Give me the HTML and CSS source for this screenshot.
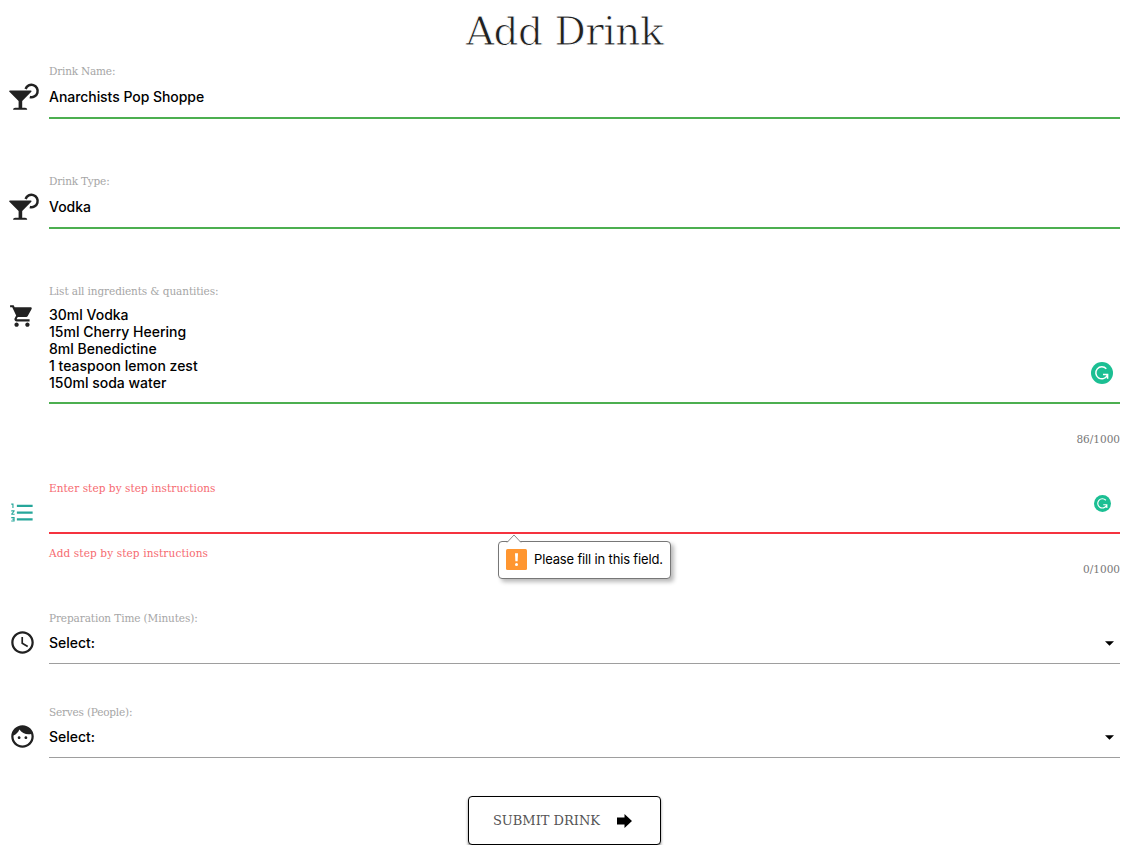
FILE: index.html
```html
<!DOCTYPE html>
<html lang="en">
<head>
<meta charset="utf-8">
<title>Add Drink</title>
<link rel="stylesheet" href="styles.css">
</head>
<body>
<svg class="defs" aria-hidden="true">
  <symbol id="cocktail" viewBox="0 0 31 28">
    <path d="M16.600 6A6.200 6.200 0 1 1 20.800 14" fill="none" stroke="#212121" stroke-width="2.500"/>
    <path d="M1 7.400h20.800c.8 0 1 .8.5 1.300L13.200 18v6.800h2.900c1.200 0 2.100.8 2.100 2H4.100c0-1.200.9-2 2.100-2h3.400V18L.4 8.700C-.1 8.200.2 7.400 1 7.400z" fill="#212121"/>
  </symbol>
  <symbol id="grammar" viewBox="0 0 22 22">
    <circle cx="11" cy="11" r="11" fill="#1bbf93"/>
    <path d="M15.300 6.800A6 6 0 1 0 16.200 13.500M12 12.600h4.600v4.200" fill="none" stroke="#fff" stroke-width="1.500"/>
  </symbol>
</svg>
<main class="page">
  <h1 class="title"><span>Add Drink</span></h1>
  <form class="form">
    <section class="row row-input">
      <svg class="icon icon-cocktail"><use href="#cocktail"/></svg>
      <div class="field">
        <label class="label l-name">Drink Name:</label>
        <div class="control valid"><span class="v-name">Anarchists Pop Shoppe</span></div>
      </div>
    </section>
    <section class="row row-input">
      <svg class="icon icon-cocktail"><use href="#cocktail"/></svg>
      <div class="field">
        <label class="label l-type">Drink Type:</label>
        <div class="control valid"><span>Vodka</span></div>
      </div>
    </section>
    <section class="row row-ingredients">
      <svg class="icon icon-cart" viewBox="0 0 24 24"><path fill="#212121" d="M7 18c-1.100 0-1.990.9-1.990 2S5.900 22 7 22s2-.9 2-2-.9-2-2-2zM1 2v2h2l3.600 7.590-1.350 2.450c-.16.28-.25.61-.25.96 0 1.100.9 2 2 2h12v-2H7.420c-.14 0-.25-.11-.25-.25l.03-.12.9-1.630h7.450c.75 0 1.410-.41 1.750-1.030l3.580-6.490c.08-.14.12-.31.12-.48 0-.55-.45-1-1-1H5.210l-.94-2H1zm16 16c-1.100 0-1.990.9-1.990 2s.89 2 1.990 2 2-.9 2-2-.9-2-2-2z"/></svg>
      <div class="field">
        <label class="label l-ing">List all ingredients &amp; quantities:</label>
        <div class="control textarea valid">
          <div class="lines"><span>30ml Vodka</span><br><span>15ml Cherry Heering</span><br><span>8ml Benedictine</span><br><span>1 teaspoon lemon zest</span><br><span>150ml soda water</span></div>
          <svg class="grammar"><use href="#grammar"/></svg>
        </div>
        <div class="foot"><span></span><span class="count">86/1000</span></div>
      </div>
    </section>
    <section class="row row-steps">
      <svg class="icon icon-list" viewBox="0 0 24 24"><path fill="#26a69a" d="M2 17h2v.5H3v1h1v.5H2v1h3v-4H2v1zm1-9h1V4H2v1h1v3zm-1 3h1.800L2 13.100v.9h3v-1H3.200L5 10.900V10H2v1zm5-6v2h14V5H7zm0 14h14v-2H7v2zm0-6h14v-2H7v2z"/></svg>
      <div class="field">
        <label class="label error l-steps">Enter step by step instructions</label>
        <div class="control invalid"><svg class="grammar small"><use href="#grammar"/></svg></div>
        <div class="foot"><span class="error helper">Add step by step instructions</span><span class="count">0/1000</span></div>
        <div class="tip">
          <svg class="tip-arrow" viewBox="0 0 16 9"><path d="M1 8.500L8 1l7 7.500" fill="#fff" stroke="#8a8a8a"/></svg>
          <svg class="tip-mark" viewBox="0 0 21 21"><rect width="21" height="21" rx="1.500" fill="#ff9630"/><path d="M9 4.300h3l-.4 8H9.400z" fill="#fff"/><circle cx="10.500" cy="15.500" r="1.500" fill="#fff"/></svg>
          <span class="tip-text">Please fill in this field.</span>
        </div>
      </div>
    </section>
    <section class="row row-select">
      <svg class="icon icon-round" viewBox="0 0 24 24"><path fill="#212121" d="M11.990 2C6.470 2 2 6.480 2 12s4.470 10 9.990 10C17.520 22 22 17.520 22 12S17.520 2 11.990 2zM12 20c-4.420 0-8-3.580-8-8s3.580-8 8-8 8 3.580 8 8-3.580 8-8 8zm.5-13H11v6l5.250 3.150.75-1.230-4.500-2.670z"/></svg>
      <div class="field">
        <label class="label l-prep">Preparation Time (Minutes):</label>
        <div class="control select"><span>Select:</span><svg class="caret" viewBox="0 0 10 5"><path d="M0 0h10L5 5z"/></svg></div>
      </div>
    </section>
    <section class="row row-select">
      <svg class="icon icon-round" viewBox="0 0 24 24"><path fill="#212121" d="M9 11.750c-.69 0-1.250.56-1.250 1.250s.56 1.250 1.250 1.250 1.250-.56 1.250-1.250-.56-1.250-1.250-1.250zm6 0c-.69 0-1.250.56-1.250 1.250s.56 1.250 1.250 1.250 1.250-.56 1.250-1.250-.56-1.250-1.250-1.250zM12 2C6.480 2 2 6.480 2 12s4.480 10 10 10 10-4.480 10-10S17.520 2 12 2zm0 18c-4.410 0-8-3.590-8-8 0-.29.02-.58.05-.86 2.360-1.050 4.230-2.980 5.210-5.370C11.070 8.330 14.050 10 17.420 10c.78 0 1.530-.09 2.250-.26.21.71.33 1.470.33 2.260 0 4.410-3.590 8-8 8z"/></svg>
      <div class="field">
        <label class="label l-serves">Serves (People):</label>
        <div class="control select"><span>Select:</span><svg class="caret" viewBox="0 0 10 5"><path d="M0 0h10L5 5z"/></svg></div>
      </div>
    </section>
    <button class="submit" type="button"><span>SUBMIT DRINK</span><svg class="arrow" viewBox="0 0 15 14"><path d="M0 3.500h7.500V0L15 7l-7.500 7v-3.500H0z"/></svg></button>
  </form>
</main>
</body>
</html>
```
FILE: styles.css
```css
* { box-sizing: border-box; }
body { margin: 0; background: #fff; font-family: Inter, sans-serif; color: #000; overflow: hidden; }
.defs { display: block; width: 0; height: 0; }
.page { width: 1120px; padding-left: 9px; }
.title { margin: 0; height: 62px; padding-top: 1px; text-align: center; font: 400 39px/61px "DejaVu Serif", serif; letter-spacing: -0.5px; color: #212121; -webkit-text-stroke: 0.8px #fff; }
.form { display: flex; flex-direction: column; }
.row { display: grid; grid-template-columns: 40px 1fr; }
.row-input { height: 110px; }
.row-ingredients { height: 197px; }
.row-steps { height: 130px; }
.row-select { height: 94px; }
.icon { display: block; }
.icon-cocktail { width: 31px; height: 28px; margin-top: 21px; }
.icon-cart { width: 26px; height: 28px; margin-top: 20px; }
.icon-list { width: 27px; height: 27px; margin-top: 20px; }
.icon-round { width: 27px; height: 27px; margin-top: 20px; }
.field { position: relative; display: flex; flex-direction: column; min-width: 0; }
.label { height: 18px; font: 400 10.5px/18px "DejaVu Serif", serif; letter-spacing: -0.2px; color: #a6a6a6; white-space: nowrap; }
.l-ing { letter-spacing: -0.11px; }
.l-steps { letter-spacing: 0.07px; }
.l-prep { letter-spacing: -0.11px; }
.error, .label.error { color: #f66a70; }
.control { display: flex; align-items: center; justify-content: space-between; height: 39px; padding-bottom: 5px; font-size: 14px; font-weight: 450; line-height: 17px; letter-spacing: 0; }
.v-name { letter-spacing: -0.05px; }
.valid { border-bottom: 2px solid #4caf50; }
.invalid { height: 37px; border-bottom: 2px solid #f5333f; padding-bottom: 0; justify-content: flex-end; align-items: flex-start; }
.select { height: 37px; border-bottom: 1px solid #9e9e9e; padding: 0 6px 6px 0; }
.textarea { height: 104px; align-items: flex-start; padding-top: 6px; }
.grammar { width: 22px; height: 22px; margin: 56px 7px 0 0; }
.grammar.small { width: 17px; height: 17px; margin: -2px 9px 0 0; }
.caret { width: 9px; height: 5px; margin-top: 3px; }
.foot { display: flex; justify-content: space-between; font: 400 10.5px/18px "DejaVu Serif", serif; }
.helper { padding-top: 10px; letter-spacing: 0.12px; }
.count { padding-top: 26px; color: #777; }
.tip { position: absolute; left: 449px; top: 62px; width: 173px; height: 38px; display: flex; align-items: center; gap: 7px; padding: 0 7px 2px; background: #fff; border: 1px solid #777; border-radius: 4px; box-shadow: 3px 3px 4px rgba(0,0,0,.28); font-size: 13px; line-height: 16px; }
.tip-arrow { position: absolute; left: 7px; top: -8px; width: 16px; height: 9px; }
.tip-mark { width: 21px; height: 21px; flex: none; }
.tip-text { white-space: nowrap; letter-spacing: -0.16px; }
.submit { display: flex; align-items: center; justify-content: center; gap: 17px; align-self: center; width: 193px; height: 49px; margin: -1px 0 0 0; padding: 1px 4px 0 0; background: #fff; border: 1px solid #000; border-radius: 4px; box-shadow: 0 2px 3px rgba(0,0,0,.45); font: 400 13px/20px "DejaVu Serif", serif; color: #555; white-space: nowrap; }
.arrow { width: 15px; height: 14px; }
```
